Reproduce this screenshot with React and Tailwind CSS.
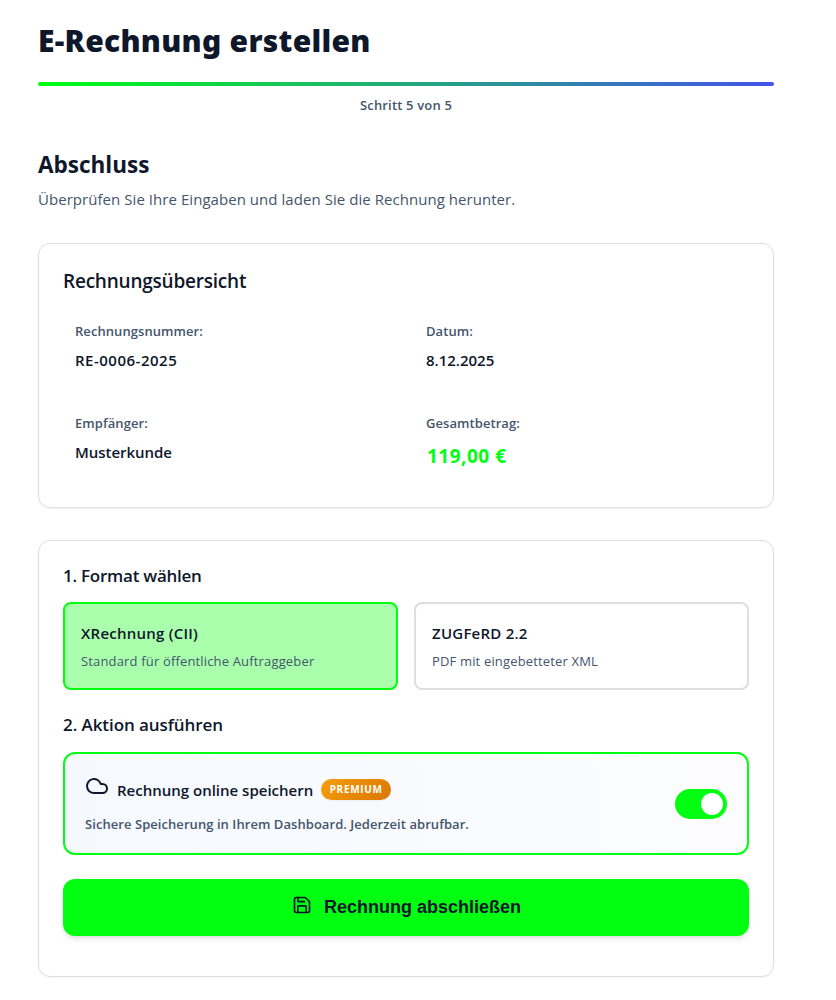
import { Cloud, Save } from "lucide-react";

function SummaryItem({ label, children }) {
  return (
    <div className="h-[76px] p-3">
      <p className="text-[13px] leading-[22px] font-semibold tracking-[0.07px] text-slate-600">{label}</p>
      {children}
    </div>
  );
}

function FormatOption({ title, description, selected }) {
  return (
    <button
      type="button"
      className={
        selected
          ? "h-[88px] rounded-lg border-2 border-[#00ff11] bg-[#aaffad] px-4 text-left"
          : "h-[88px] rounded-lg border-2 border-[#dedede] bg-white px-4 text-left"
      }
    >
      <span className="block text-[15px] leading-[26px] font-semibold tracking-[0.24px] text-slate-900">{title}</span>
      <span className="mt-1 block text-[13px] leading-[22px] tracking-[0.16px] text-slate-600">{description}</span>
    </button>
  );
}

export default function App() {
  return (
    <main className="h-[1000px] bg-white pt-[17px] pr-[62px] pl-[38px] font-['Open_Sans',sans-serif] text-slate-900">
      <h1 className="font-['Noto_Sans','Open_Sans',sans-serif] text-[30px] leading-[48px] font-black tracking-[0.28px]">
        E-Rechnung erstellen
      </h1>
      <div className="mt-[17px] h-1 rounded-full bg-linear-to-r/srgb from-[#00ff11] to-[#4353ea]" />
      <p className="mt-[9px] text-center text-[13px] leading-5 font-semibold tracking-[0.17px] text-slate-600">
        Schritt 5 von 5
      </p>

      <h2 className="mt-[34px] text-[22.5px] leading-8 font-bold">Abschluss</h2>
      <p className="mt-1.5 text-[15px] leading-6 tracking-[0.05px] text-slate-600">
        Überprüfen Sie Ihre Eingaben und laden Sie die Rechnung herunter.
      </p>

      <section className="mt-8 h-[265px] rounded-xl border border-[#dedede] px-6 pt-[23px] shadow-xs">
        <h3 className="text-[19px] leading-7 font-semibold tracking-[-0.22px]">Rechnungsübersicht</h3>
        <div className="mt-[13px] grid grid-cols-2 gap-4">
          <SummaryItem label="Rechnungsnummer:">
            <p className="mt-1.5 text-[15px] leading-6 font-semibold tracking-[0.5px]">RE-0006-2025</p>
          </SummaryItem>
          <SummaryItem label="Datum:">
            <p className="mt-1.5 text-[15px] leading-6 font-semibold">8.12.2025</p>
          </SummaryItem>
          <SummaryItem label="Empfänger:">
            <p className="mt-1.5 text-[15px] leading-6 font-semibold tracking-[-0.05px]">Musterkunde</p>
          </SummaryItem>
          <SummaryItem label="Gesamtbetrag:">
            <p className="mt-[7px] pl-px text-[19px] leading-[31px] font-bold tracking-[0.5px] text-[#00ff11]">
              119,00 €
            </p>
          </SummaryItem>
        </div>
      </section>

      <section className="mt-8 h-[437px] rounded-xl border border-[#dedede] px-6 pt-[21px] shadow-xs">
        <h4 className="text-[17px] leading-7 font-semibold tracking-[-0.25px]">1. Format wählen</h4>
        <div className="mt-3 grid grid-cols-2 gap-4">
          <FormatOption selected title="XRechnung (CII)" description="Standard für öffentliche Auftraggeber" />
          <FormatOption title="ZUGFeRD 2.2" description="PDF mit eingebetteter XML" />
        </div>

        <h4 className="mt-[21px] text-[17px] leading-7 font-semibold tracking-[-0.08px]">2. Aktion ausführen</h4>
        <div className="mt-[13px] flex h-[103px] items-center justify-between rounded-xl border-2 border-[#00ff11] bg-linear-to-r from-[#f5f9ff] to-[#fcfcfe] px-5">
          <div className="h-[60px]">
            <div className="flex h-8 items-start">
              <Cloud size={24} strokeWidth={2} />
              <span className="mt-1 ml-2 text-[15px] leading-6 font-semibold">Rechnung online speichern</span>
              <span className="mt-[5px] ml-2 flex h-[21px] w-[70px] items-center justify-center rounded-full bg-linear-135 from-[#f59e0b] to-[#d97706] text-[10px] font-bold tracking-[0.7px] text-white shadow-xs">
                PREMIUM
              </span>
            </div>
            <p className="mt-[7px] text-[13px] leading-[22px] font-semibold tracking-[0.06px] text-slate-600">
              Sichere Speicherung in Ihrem Dashboard. Jederzeit abrufbar.
            </p>
          </div>
          <div className="flex h-[30px] w-[52px] items-center justify-end rounded-full bg-[#00ff11] p-1">
            <div className="size-[22px] rounded-full bg-white" />
          </div>
        </div>

        <button
          type="button"
          className="mt-6 flex h-[57px] w-full items-center justify-center gap-3 rounded-xl bg-[#00ff11] pl-px font-['Liberation_Sans',sans-serif] text-[18px] font-bold shadow-md"
        >
          <Save size={20} strokeWidth={2} className="mb-1.5" />
          Rechnung abschließen
        </button>
      </section>
    </main>
  );
}
